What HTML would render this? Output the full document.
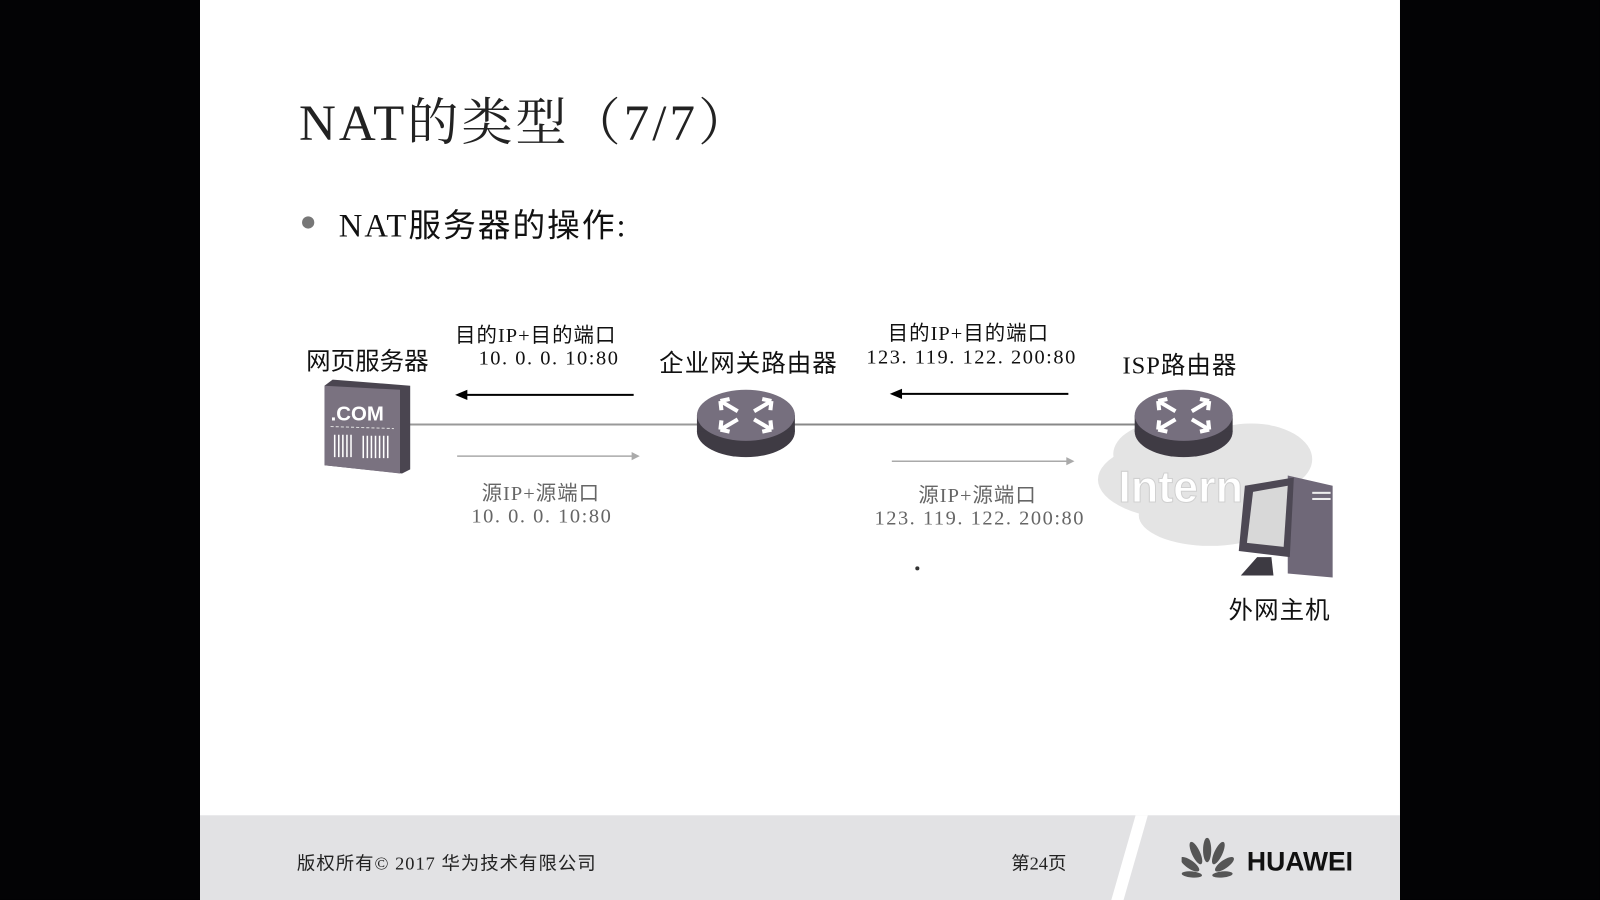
<!DOCTYPE html>
<html><head><meta charset="utf-8"><style>
html,body{margin:0;padding:0;background:#000;width:1600px;height:900px;overflow:hidden}
#w{position:absolute;left:0;top:0;width:1568px;height:882px;transform:scale(1.0204);transform-origin:0 0;background:#030305}
#s{position:absolute;left:196px;top:0;width:1176px;height:882px;background:#fff;overflow:hidden}
.t{position:absolute;white-space:nowrap;color:#111;font-family:"Liberation Serif","Noto Serif CJK SC",serif}
.c{font-family:"Liberation Serif","Noto Sans CJK SC",sans-serif}
.n{letter-spacing:1.5px}
.g{color:#666}
#f{position:absolute;left:0;top:799px;width:1176px;height:83px;background:#e2e2e4}
</style></head><body><div id="w"><div id="s">
<div class="t" style="left:97px;top:80px;font-size:50px;color:#222;letter-spacing:3px">NAT<span style="font-family:'Noto Serif CJK SC',serif">的类型</span>（7/7）</div>
<div style="position:absolute;left:100px;top:212px;width:12px;height:12px;border-radius:50%;background:#777"></div>
<div class="t c" style="left:136px;top:196px;font-size:32px;letter-spacing:2px">NAT服务器的操作:</div>

<div class="t c" style="left:104px;top:334px;font-size:24px">网页服务器</div>
<div class="t c" style="left:250px;top:312px;font-size:20px;letter-spacing:1px">目的IP+目的端口</div>
<div class="t n" style="left:273px;top:340px;font-size:20px">10. 0. 0. 10:80</div>
<div class="t c" style="left:450px;top:336px;font-size:24px;letter-spacing:1px">企业网关路由器</div>
<div class="t c" style="left:674px;top:310px;font-size:20px;letter-spacing:1px">目的IP+目的端口</div>
<div class="t n" style="left:653px;top:339px;font-size:20px">123. 119. 122. 200:80</div>
<div class="t c" style="left:904px;top:338px;font-size:24px;letter-spacing:1px">ISP路由器</div>
<div class="t c g" style="left:276px;top:467px;font-size:20px;letter-spacing:1px">源IP+源端口</div>
<div class="t g n" style="left:266px;top:495px;font-size:20px">10. 0. 0. 10:80</div>
<div class="t c g" style="left:704px;top:469px;font-size:20px;letter-spacing:1px">源IP+源端口</div>
<div class="t g n" style="left:661px;top:497px;font-size:20px">123. 119. 122. 200:80</div>
<div class="t c" style="left:1008px;top:578px;font-size:24px;letter-spacing:1px">外网主机</div>

<svg style="position:absolute;left:0;top:0" width="1176" height="800">
<defs><g id="r"><ellipse cx="0" cy="16" rx="48" ry="25" fill="#3f3b44"/><rect x="-48" y="0" width="96" height="16" fill="#3f3b44"/><ellipse cx="0" cy="0" rx="48" ry="25" fill="#766f7e"/><g stroke="#fff" stroke-width="4" fill="none"><path d="M-25 -14 L-8 -4 M-25 -14 L-24 -5 M-25 -14 L-16 -16 M25 -14 L8 -4 M25 -14 L16 -16 M25 -14 L24 -5 M-25 14 L-8 4 M-25 14 L-16 16 M-25 14 L-24 5 M25 14 L8 4 M25 14 L24 5 M25 14 L16 16"/></g></g></defs>
<g fill="#e4e4e4"><ellipse cx="970" cy="470" rx="90" ry="40"/><ellipse cx="950" cy="445" rx="55" ry="32"/><ellipse cx="1030" cy="450" rx="60" ry="35"/><ellipse cx="990" cy="505" rx="70" ry="30"/></g>
<text x="900" y="492" font-family="Liberation Sans" font-weight="bold" font-size="44" fill="#fff" stroke="#d0d0d0">Intern</text>
<line x1="205" y1="416" x2="490" y2="416" stroke="#999" stroke-width="2"/>
<line x1="580" y1="416" x2="920" y2="416" stroke="#888" stroke-width="2"/>
<line x1="258" y1="387" x2="425" y2="387" stroke="#000" stroke-width="2"/><polygon points="250,387 262,382 262,392" fill="#000"/>
<line x1="684" y1="386" x2="851" y2="386" stroke="#000" stroke-width="2"/><polygon points="676,386 688,381 688,391" fill="#000"/>
<line x1="252" y1="447" x2="424" y2="447" stroke="#aaa" stroke-width="1.5"/><polygon points="431,447 423,443 423,451" fill="#aaa"/>
<line x1="678" y1="452" x2="850" y2="452" stroke="#aaa" stroke-width="1.5"/><polygon points="857,452 849,448 849,456" fill="#aaa"/>
<g transform="translate(122,372)"><polygon points="0,6 8,0 84,6 84,88 76,92 0,84" fill="#4a4550"/><polygon points="0,6 74,10 74,92 0,84" fill="#7a7280"/><text x="6" y="40" font-family="Liberation Sans" font-weight="bold" font-size="20" fill="#fff">.COM</text><line x1="6" y1="46" x2="68" y2="48" stroke="#ddd" stroke-dasharray="3,2"/><g stroke="#fff" stroke-width="1.5"><path d="M10 54V76M14 54V76M18 54V76M22 54V76M26 54V76M38 55V77M42 55V77M46 55V77M50 55V77M54 55V77M58 55V77M62 55V77"/></g></g>
<use href="#r" x="535" y="407"/>
<use href="#r" x="964" y="407"/>
<g transform="translate(1010,466)"><polygon points="56,0 100,10 100,100 56,96" fill="#6f6878"/><polygon points="14,10 62,2 58,80 8,74" fill="#4d4854"/><polygon points="22,16 56,10 52,70 16,66" fill="#d8d8d8"/><polygon points="26,80 40,80 42,98 10,98" fill="#3d3a42"/><rect x="80" y="16" width="18" height="2" fill="#eee"/><rect x="80" y="22" width="18" height="2" fill="#eee"/></g>
<circle cx="703" cy="557" r="2" fill="#333"/>
</svg>

<div id="f">
<div class="t c" style="left:95px;top:33px;font-size:18px;color:#222;letter-spacing:1px">版权所有© 2017 华为技术有限公司</div>
<div class="t c" style="left:795px;top:33px;font-size:18px;color:#222">第24页</div>
<div style="position:absolute;left:905px;top:0;width:12px;height:83px;background:#fff;transform:skewX(-16deg)"></div>
<svg style="position:absolute;left:962px;top:22px" width="60" height="42"><g fill="#555"><ellipse cx="25" cy="12" rx="4" ry="12"/><ellipse cx="14" cy="15" rx="4" ry="12" transform="rotate(-25 14 15)"/><ellipse cx="36" cy="15" rx="4" ry="12" transform="rotate(25 36 15)"/><ellipse cx="8" cy="26" rx="4" ry="11" transform="rotate(-55 8 26)"/><ellipse cx="42" cy="26" rx="4" ry="11" transform="rotate(55 42 26)"/><ellipse cx="10" cy="36" rx="3" ry="10" transform="rotate(-85 10 36)"/><ellipse cx="40" cy="36" rx="3" ry="10" transform="rotate(85 40 36)"/></g></svg>
<div class="t" style="left:1026px;top:30px;font-size:26px;font-weight:bold;font-family:'Liberation Sans',sans-serif;color:#111">HUAWEI</div>
</div>
</div></div></body></html>
